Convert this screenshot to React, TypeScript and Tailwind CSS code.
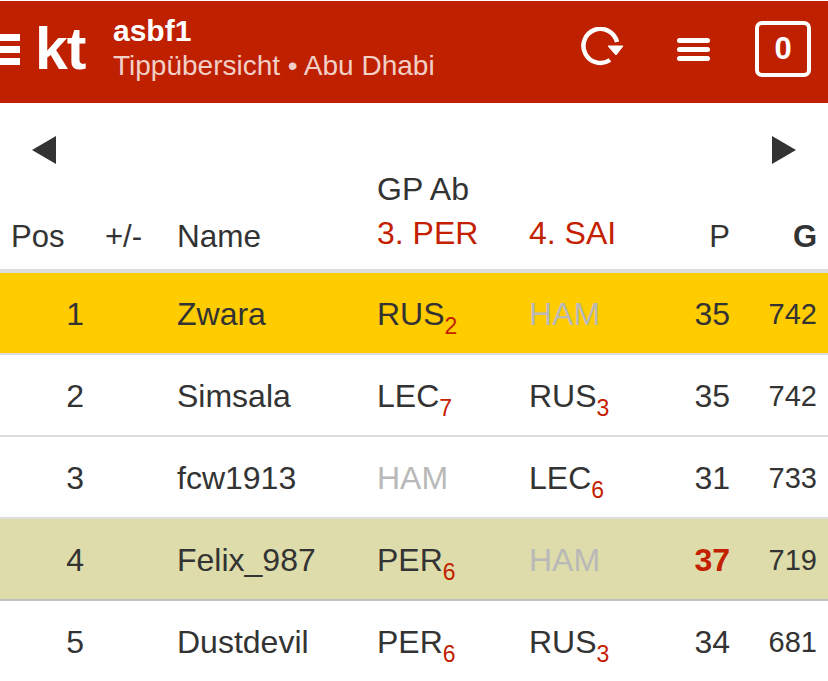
const ROWS = [
  { pos: 1, name: "Zwara", a: "RUS", aSub: "2", b: "HAM", bOff: true, p: "35", g: "742", tone: "bg-[#ffcc00]" },
  { pos: 2, name: "Simsala", a: "LEC", aSub: "7", b: "RUS", bSub: "3", p: "35", g: "742", tone: "bg-white" },
  { pos: 3, name: "fcw1913", a: "HAM", aOff: true, b: "LEC", bSub: "6", p: "31", g: "733", tone: "bg-white" },
  { pos: 4, name: "Felix_987", a: "PER", aSub: "6", b: "HAM", bOff: true, p: "37", best: true, g: "719", tone: "bg-[#dddcaa]" },
  { pos: 5, name: "Dustdevil", a: "PER", aSub: "6", b: "RUS", bSub: "3", p: "34", g: "681", tone: "bg-white" },
];

const COLS = "grid grid-cols-[105px_72px_200px_152px_141px_60px_98px]";

function Tip({ code, sub, off }: { code: string; sub?: string; off?: boolean }) {
  return (
    <span className={off ? "text-[#b9b9b9]" : ""}>
      {code}
      {sub ? <span className="relative top-[9px] text-[23px] text-[#c32000]">{sub}</span> : null}
    </span>
  );
}

export default function App() {
  return (
    <div className="h-[681px] w-[828px] overflow-hidden bg-white font-['Liberation_Sans',Arial,sans-serif] text-[#333333]">
      <header className="mt-px flex h-[102px] items-center bg-[#bf2000] pb-[6px] text-white">
        <div className="flex w-[20px] flex-col gap-[5px]">
          <div className="h-[7px] bg-white" />
          <div className="h-[7px] bg-white" />
          <div className="h-[7px] bg-white" />
        </div>
        <div className="ml-[15px] w-[78px] text-[59px] font-bold leading-none tracking-[-1px]">kt</div>
        <div className="flex-1">
          <div className="text-[30px] font-bold leading-[34px]">asbf1</div>
          <div className="text-[28px] leading-[36px] text-[#f2cfc7]">Tippübersicht • Abu Dhabi</div>
        </div>
        <svg width="44" height="40" viewBox="0 0 44 40" fill="none" className="mb-[4px] mr-[53px]">
          <path d="M30 33 A17 17 0 1 1 37 15" stroke="white" strokeWidth="4.5" />
          <path d="M28 19 L43 19 L36 28 Z" fill="white" stroke="white" strokeWidth="1" strokeLinejoin="round" />
        </svg>
        <div className="mr-[45px] flex w-[33px] flex-col gap-[4px]">
          <div className="h-[5px] rounded-full bg-white" />
          <div className="h-[5px] rounded-full bg-white" />
          <div className="h-[5px] rounded-full bg-white" />
        </div>
        <div className="mr-[17px] grid h-[56px] w-[56px] place-items-center rounded-[7px] border-[4px] border-white text-[31px] font-bold">
          0
        </div>
      </header>

      <div className="flex h-[61px] items-end justify-between px-[32px]">
        <svg width="24" height="28" viewBox="0 0 24 28"><path d="M24 0 V28 L0 14 Z" fill="#333333" /></svg>
        <svg width="24" height="28" viewBox="0 0 24 28"><path d="M0 0 V28 L24 14 Z" fill="#333333" /></svg>
      </div>

      <div className={`${COLS} h-[109px] border-b-[4px] border-[#dddddd] text-[31px]`}>
        <div className="self-end pb-[9px] pl-[11px]">Pos</div>
        <div className="self-end pb-[9px]">+/-</div>
        <div className="self-end pb-[9px] text-[31.5px]">Name</div>
        <div className="col-span-2 self-end pb-[14px] text-[32px]">
          <div className="leading-[43px]">GP Ab</div>
          <div className="flex leading-[44px] text-[#c32000]">
            <span className="w-[152px]">3. PER</span>
            <span>4. SAI</span>
          </div>
        </div>
        <div className="self-end pb-[9px] text-right">P</div>
        <div className="self-end pb-[9px] pr-[11px] text-right font-bold">G</div>
      </div>

      {ROWS.map((r) => (
        <div
          key={r.pos}
          className={`${COLS} ${r.tone} h-[82px] items-center border-b-[2px] pt-[2px] text-[32px] ${r.best ? "border-[#c0c0c0]" : "border-[#dddddd]"}`}
        >
          <div className="pr-[21px] text-right">{r.pos}</div>
          <div />
          <div>{r.name}</div>
          <div><Tip code={r.a} sub={r.aSub} off={r.aOff} /></div>
          <div><Tip code={r.b} sub={r.bSub} off={r.bOff} /></div>
          <div className={r.best ? "text-right font-bold text-[#c32000]" : "text-right"}>{r.p}</div>
          <div className="pr-[11px] pt-[2px] text-right text-[29px]">{r.g}</div>
        </div>
      ))}
    </div>
  );
}
